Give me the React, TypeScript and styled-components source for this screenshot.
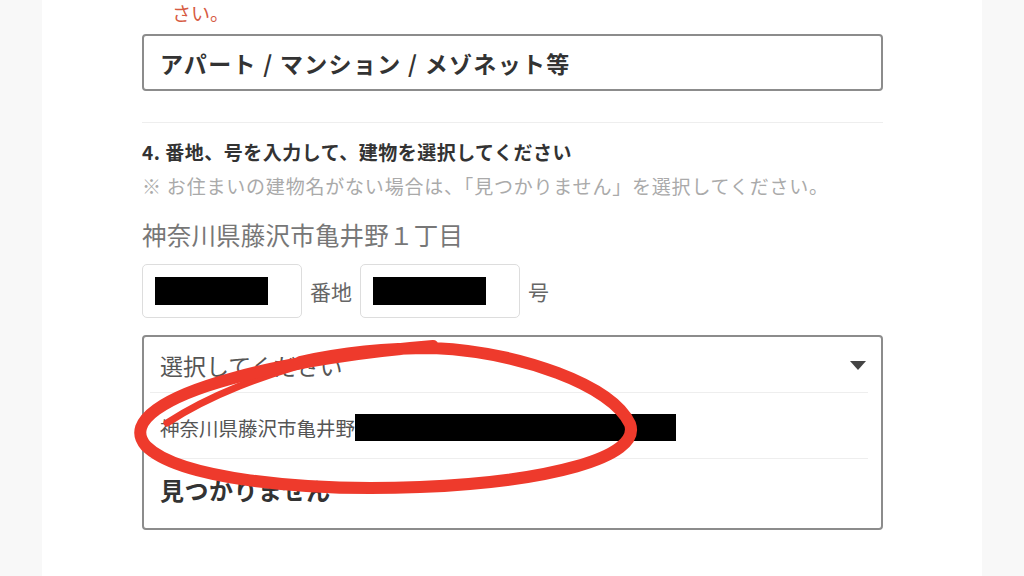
import styled, { createGlobalStyle } from 'styled-components';

const GlobalStyle = createGlobalStyle`
  html, body {
    margin: 0;
    padding: 0;
    background: #f8f8f8;
    font-family: "Noto Sans CJK JP", "Noto Sans", sans-serif;
  }
  * {
    box-sizing: border-box;
  }
`;

const Page = styled.div`
  position: relative;
  width: 1024px;
  height: 576px;
  overflow: hidden;
`;

const Card = styled.main`
  width: 940px;
  height: 100%;
  margin: 0 auto;
  padding: 0 99px 0 100px;
  background: #ffffff;
`;

const ErrorTail = styled.p`
  margin: 0;
  padding: 1px 0 0 30px;
  font-size: 19px;
  line-height: 24px;
  color: #d65a42;
`;

const TypeInput = styled.div`
  display: flex;
  align-items: center;
  height: 57px;
  margin-top: 9px;
  padding-left: 16px;
  border: 2px solid #8c8c8c;
  border-radius: 4px;
  font-size: 23px;
  font-weight: 700;
  letter-spacing: 1.3px;
  color: #333;
`;

const Divider = styled.hr`
  margin: 31px 0 0;
  border: 0;
  border-top: 1px solid #eeeeee;
`;

const StepTitle = styled.h3`
  margin: 16px 0 0;
  font-size: 19px;
  line-height: 26px;
  font-weight: 700;
  letter-spacing: 0.5px;
  color: #333;
`;

const Hint = styled.p`
  margin: 8px 0 0;
  font-size: 19px;
  line-height: 26px;
  letter-spacing: 0.8px;
  color: #aaaaaa;
  white-space: nowrap;
`;

const Address = styled.p`
  margin: 19px 0 0;
  font-size: 24.5px;
  line-height: 34px;
  letter-spacing: 0.2px;
  color: #777;
`;

const NumberRow = styled.div`
  display: flex;
  align-items: center;
  gap: 8px;
  margin-top: 12px;
`;

const NumberBox = styled.div`
  display: flex;
  align-items: center;
  width: 160px;
  height: 54px;
  padding-left: 12px;
  border: 1px solid #dddddd;
  border-radius: 5px;
`;

const Redacted = styled.span<{ $w: number; $h: number }>`
  display: inline-block;
  width: ${(p) => p.$w}px;
  height: ${(p) => p.$h}px;
  background: #000;
`;

const Unit = styled.span`
  font-size: 21px;
  color: #666;
`;

const Select = styled.div`
  display: flex;
  flex-direction: column;
  height: 195px;
  margin-top: 17px;
  border: 2px solid #8c8c8c;
  border-radius: 4px;
`;

const SelectHead = styled.div`
  display: flex;
  align-items: center;
  justify-content: space-between;
  height: 55px;
  padding: 0 15px 0 16px;
  font-size: 23px;
  color: #555;
`;

const Caret = styled.span`
  width: 0;
  height: 0;
  border-left: 8.5px solid transparent;
  border-right: 8.5px solid transparent;
  border-top: 9px solid #444;
  margin-top: 2px;
`;

const OptionDivider = styled.div`
  height: 1px;
  margin: 0 13px 0 6px;
  background: #eeeeee;
`;

const Option = styled.div<{ $bold?: boolean }>`
  display: flex;
  align-items: center;
  flex: 1;
  padding: ${(p) => (p.$bold ? '0 0 8px 16px' : '4px 0 0 16px')};
  font-size: ${(p) => (p.$bold ? '24px' : '19.5px')};
  font-weight: ${(p) => (p.$bold ? 700 : 400)};
  letter-spacing: ${(p) => (p.$bold ? '0.5px' : '0')};
  color: ${(p) => (p.$bold ? '#333' : '#555')};
`;

const Scribble = styled.svg`
  position: absolute;
  top: 0;
  left: 0;
  pointer-events: none;
`;

export default function App() {
  return (
    <>
      <GlobalStyle />
      <Page>
        <Card>
          <ErrorTail>さい。</ErrorTail>
          <TypeInput>アパート / マンション / メゾネット等</TypeInput>
          <Divider />
          <StepTitle>4. 番地、号を入力して、建物を選択してください</StepTitle>
          <Hint>※ お住まいの建物名がない場合は、「見つかりません」を選択してください。</Hint>
          <Address>神奈川県藤沢市亀井野１丁目</Address>
          <NumberRow>
            <NumberBox>
              <Redacted $w={113} $h={28} />
            </NumberBox>
            <Unit>番地</Unit>
            <NumberBox>
              <Redacted $w={113} $h={28} />
            </NumberBox>
            <Unit>号</Unit>
          </NumberRow>
          <Select>
            <SelectHead>
              選択してください
              <Caret />
            </SelectHead>
            <OptionDivider />
            <Option>
              神奈川県藤沢市亀井野
              <Redacted $w={321} $h={27} />
            </Option>
            <OptionDivider />
            <Option $bold>見つかりません</Option>
          </Select>
        </Card>
        <Scribble width="1024" height="576" viewBox="0 0 1024 576">
          <path
            d="M167 423 C205 398 265 372 335 357"
            fill="none"
            stroke="#ee3a2c"
            strokeWidth="7"
            strokeLinecap="round"
          />
          <path
            d="M300 362 C345 352 390 348 433 348 C520 352 612 385 630 424 C642 458 545 482 420 487 C300 492 178 478 146 446 C124 421 168 396 230 379 C290 362 370 351 433 346"
            fill="none"
            stroke="#ee3a2c"
            strokeWidth="12"
            strokeLinecap="round"
            strokeLinejoin="round"
          />
        </Scribble>
      </Page>
    </>
  );
}
